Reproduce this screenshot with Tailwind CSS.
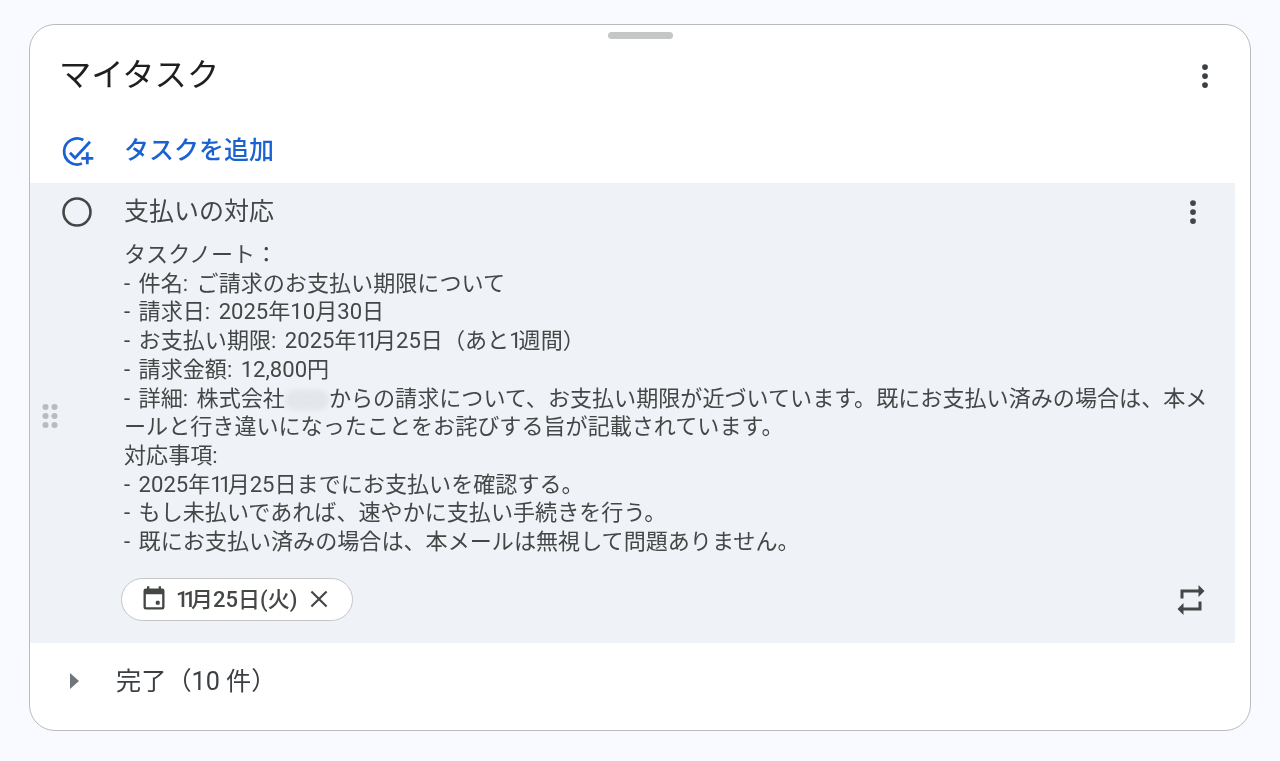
<!DOCTYPE html>
<html lang="ja">
<head>
<meta charset="utf-8">
<script src="https://cdn.jsdelivr.net/npm/@tailwindcss/browser@4"></script>
</head>
<body class="h-[761px] overflow-hidden bg-[#f8faff] pt-[24px] pl-[29px] font-['Roboto','Noto_Sans_CJK_JP',sans-serif]">
<main class="relative h-[707px] w-[1222px] rounded-[26px] border-[1.5px] border-[#b9bbbe] bg-white blur-[0.4px]">
  <div class="absolute left-[578px] top-[7px] h-[7px] w-[65px] rounded-full bg-[#c4c7c5]"></div>
  <header class="flex h-[97px] items-start justify-between pl-[29px] pr-[30px] pt-[26px]">
    <h1 class="text-[32.3px] leading-[48px] text-[#1f1f1f]">マイタスク</h1>
    <svg class="mt-[10px] h-[30px] w-[30px] text-[#3c4043]" viewBox="0 0 24 24" fill="currentColor"><circle cx="12" cy="4.8" r="2.3"/><circle cx="12" cy="12" r="2.3"/><circle cx="12" cy="19.2" r="2.3"/></svg>
  </header>
  <div class="flex h-[61px] items-center pl-[29px] pb-[4px] text-[#1a62d2]">
    <svg class="h-[36px] w-[36px]" viewBox="0 0 36 36" fill="none" stroke="currentColor" stroke-width="2.8"><path d="M24.3 7A13 13 0 1 0 23 30.5"/><path d="M11 19.7L16 25L31 8.7"/><path d="M28.3 19.3v12M22.3 25.3h12"/></svg>
    <span class="ml-[29px] text-[25px] font-medium">タスクを追加</span>
  </div>
  <section class="relative mr-[15px] h-[460px] bg-[#eff2f6] text-[#444746]">
    <svg class="absolute left-[8px] top-[214px] h-[36px] w-[24px] text-[#b9bcbe]" viewBox="0 0 24 36" fill="currentColor"><circle cx="7.5" cy="10" r="3"/><circle cx="16.5" cy="10" r="3"/><circle cx="7.5" cy="19" r="3"/><circle cx="16.5" cy="19" r="3"/><circle cx="7.5" cy="28" r="3"/><circle cx="16.5" cy="28" r="3"/></svg>
    <div class="flex items-start pl-[30px] pr-[29px]">
      <svg class="mt-[12px] h-[34px] w-[34px] shrink-0 text-[#444746]" viewBox="0 0 34 34" fill="none" stroke="currentColor" stroke-width="2.6"><circle cx="17" cy="17" r="13.5"/></svg>
      <div class="ml-[30px] min-w-0 flex-1">
        <h2 class="pt-[11px] text-[25px] leading-[36px]">支払いの対応</h2>
        <p class="mt-[11px] w-[1084px] whitespace-nowrap text-[22.08px] leading-[28.7px] [word-spacing:3px]">タスクノート：<br>- 件名: ご請求のお支払い期限について<br>- 請求日: 2025年10月30日<br>- お支払い期限: 2025年<span class="tracking-[-3.75px]">11</span>月25日（あと<span class="tracking-[-3px]">1</span>週間）<br>- 請求金額: 12,800円<br>- 詳細: 株式会社<span class="relative inline-block h-[20px] w-[44px] align-middle"><span class="absolute inset-0 rounded-full bg-[#e4e6ea] blur-[2px]"></span></span>からの請求について、お支払い期限が近づいています。既にお支払い済みの場合は、本メ<br>ールと行き違いになったことをお詫びする旨が記載されています。<br>対応事項:<br>- 2025年<span class="tracking-[-3.75px]">11</span>月25日までにお支払いを確認する。<br>- もし未払いであれば、速やかに支払い手続きを行う。<br>- 既にお支払い済みの場合は、本メールは無視して問題ありません。</p>
        <div class="mt-[21px] flex items-center justify-between">
          <div class="-ml-[3px] flex h-[43px] w-[232px] items-center rounded-full border-[1.5px] border-[#c4c7c5] bg-white pl-[18px]">
            <svg class="h-[28px] w-[28px] shrink-0" viewBox="0 0 24 24" fill="currentColor"><path d="M19 3h-1V1h-2v2H8V1H6v2H5a2 2 0 0 0-2 2v14a2 2 0 0 0 2 2h14a2 2 0 0 0 2-2V5a2 2 0 0 0-2-2zm0 16H5V8h14v11z"/><rect x="13.5" y="13.5" width="3.4" height="3.4" rx="1"/></svg>
            <span class="ml-[8px] whitespace-nowrap text-[22px] font-medium"><span class="tracking-[-5px]">11</span>月25日(火)</span>
            <svg class="ml-[9px] h-[26px] w-[26px] shrink-0" viewBox="0 0 24 24" fill="none" stroke="currentColor" stroke-width="2"><path d="M5 5l14 14M19 5L5 19"/></svg>
          </div>
          <svg class="-mr-[3px] mt-[1px] h-[36px] w-[36px]" viewBox="0 0 24 24" fill="currentColor"><path d="M7 7h10v3l4-4-4-4v3H5v6h2V7zm10 10H7v-3l-4 4 4 4v-3h12v-6h-2v4z"/></svg>
        </div>
      </div>
    </div>
    <svg class="absolute right-[27px] top-[14px] h-[30px] w-[30px]" viewBox="0 0 24 24" fill="currentColor"><circle cx="12" cy="4.8" r="2.3"/><circle cx="12" cy="12" r="2.3"/><circle cx="12" cy="19.2" r="2.3"/></svg>
  </section>
  <div class="flex h-[76px] items-center pl-[39px] text-[#444746]">
    <svg class="h-[16px] w-[11px]" viewBox="0 0 11 16" fill="#70757a"><path d="M1 0l9 8-9 8z"/></svg>
    <span class="ml-[36px] pt-[1px] text-[25.2px] text-[#3c4043]">完了（10 件）</span>
  </div>
</main>
</body>
</html>
